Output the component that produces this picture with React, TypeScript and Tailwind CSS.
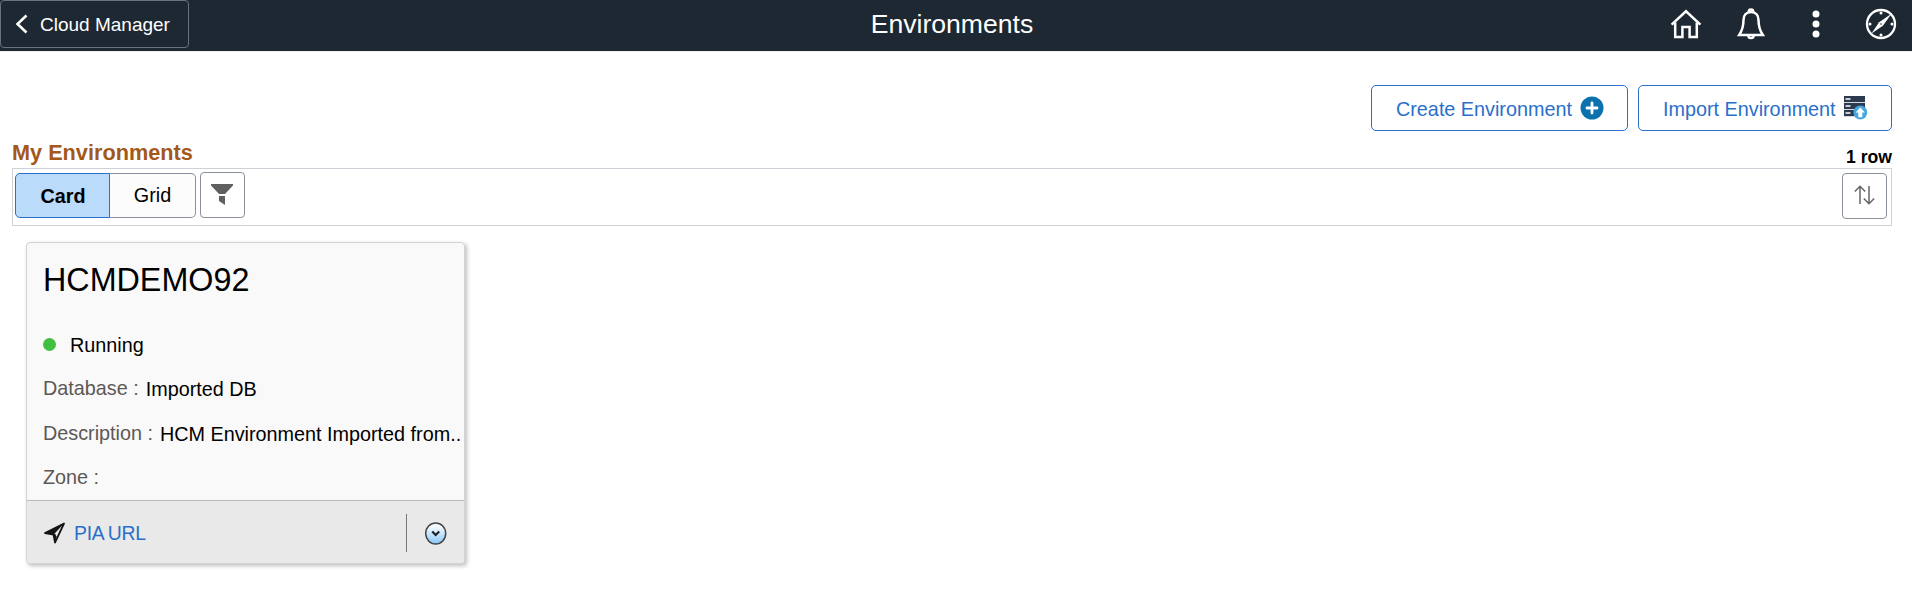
import React from 'react';

function HomeIcon() {
  return (
    <svg className="h-[30px] w-[32px]" viewBox="0 0 32 30" fill="none" stroke="#fff" strokeWidth="2.500">
      <path d="M1.600 15.600 16 2.300l14.400 13.300" />
      <path d="M5.200 13.500v14.400h7.200V18h7.200v9.900h7.200V13.500" />
    </svg>
  );
}

function BellIcon() {
  return (
    <svg className="h-[32px] w-[28px]" viewBox="0 0 28 32" fill="none" stroke="#fff" strokeWidth="2.500">
      <path d="M14 4c-5 0-7.500 3.600-7.500 8 0 7-1.200 10.400-4.300 15h23.600c-3.100-4.600-4.300-8-4.300-15 0-4.400-2.500-8-7.500-8Z" />
      <path d="M11.800 3.800a2.200 2.200 0 0 1 4.400 0" />
      <path d="M11.400 27.500a2.600 2.600 0 0 0 5.200 0" />
    </svg>
  );
}

function CompassIcon() {
  return (
    <svg className="h-[32px] w-[32px]" viewBox="0 0 32 32" fill="none">
      <circle cx="16" cy="16" r="14" stroke="#fff" strokeWidth="2.300" />
      <path d="M26.500 5.800 17.900 17.700 6.500 25.500l7.600-11.300Z" fill="#fff" />
      <circle cx="16" cy="16" r=".8" fill="#1e2833" />
      <g fill="#fff">
        <circle cx="16" cy="5" r="1.500" />
        <circle cx="16" cy="27" r="1.500" />
        <circle cx="5" cy="16" r="1.500" />
        <circle cx="27" cy="16" r="1.500" />
      </g>
    </svg>
  );
}

function ServerIcon() {
  return (
    <svg className="h-[24px] w-[24px]" viewBox="0 0 24 24">
      <g fill="#2b3a4f">
        <rect x="0" y="0" width="21" height="6.200" />
        <rect x="0" y="7" width="21" height="6.200" />
        <rect x="0" y="14" width="21" height="6.200" />
      </g>
      <path d="M1.500 3h5M1.500 10h5M1.500 17h5" stroke="#fff" strokeWidth="1.700" />
      <circle cx="16.300" cy="16.500" r="6.900" fill="#45a8e0" />
      <path d="m16.300 11.500 4.600 4.900h-2.600v4.800h-4v-4.800h-2.600Z" fill="#fff" />
    </svg>
  );
}

function Field({ label, value }: { label: string; value?: string }) {
  return (
    <div className="flex h-6 whitespace-nowrap leading-6">
      <span className="shrink-0 text-[#5c5856]">{label} :</span>
      {value && <span className="ml-[7px] pt-px text-black">{value}</span>}
    </div>
  );
}

export default function App() {
  return (
    <div className="h-[607px] overflow-hidden bg-white font-['Liberation_Sans',Arial,sans-serif] text-[19.8px] text-black">
      <header className="grid h-[52px] grid-cols-[1fr_auto_1fr] border-b border-[#eff1f4] bg-[#1e2833] text-white">
        <button className="flex h-12 w-[189px] items-center rounded-[4px] border border-[#697282] pl-[14px] text-[19px]">
          <svg className="h-[20px] w-[13px]" viewBox="0 0 13 20" fill="none" stroke="#fff" strokeWidth="2.600">
            <path d="M11.500 1.500 2.500 10l9 8.500" />
          </svg>
          <span className="ml-[12px] pt-[2px]">Cloud Manager</span>
        </button>
        <h1 className="pr-[8px] text-[26.6px] leading-[48px]">Environments</h1>
        <div className="flex h-12 items-center justify-end pr-[15px]">
          <HomeIcon />
          <span className="ml-[35px] flex"><BellIcon /></span>
          <svg className="ml-[47px] h-[28px] w-[8px]" viewBox="0 0 8 28" fill="#fff">
            <circle cx="4" cy="4" r="3.500" />
            <circle cx="4" cy="14" r="3.500" />
            <circle cx="4" cy="24" r="3.500" />
          </svg>
          <span className="ml-[45px] flex"><CompassIcon /></span>
        </div>
      </header>

      <main className="pl-3 pr-5">
        <div className="flex justify-end gap-[10px] pt-[33px] text-[#2a6fca]">
          <button className="flex h-[46px] w-[257px] items-center rounded-[5px] border border-[#2a6fca] pl-[24px]">
            <span className="w-[177px] whitespace-nowrap pt-[3px] text-left">Create Environment</span>
            <svg className="ml-[7px] h-[24px] w-[24px]" viewBox="0 0 24 24">
              <circle cx="12" cy="12" r="11.500" fill="#0c72ad" />
              <path d="M12 7v10M7 12h10" stroke="#fff" strokeWidth="2.800" strokeLinecap="round" />
            </svg>
          </button>
          <button className="flex h-[46px] w-[254px] items-center rounded-[5px] border border-[#2a6fca] pl-[24px]">
            <span className="w-[174px] whitespace-nowrap pt-[3px] text-left">Import Environment</span>
            <span className="ml-[7px] flex"><ServerIcon /></span>
          </button>
        </div>

        <div className="flex h-[37px] items-end justify-between font-bold">
          <h2 className="mb-[2px] text-[21.7px] leading-[26px] text-[#a4571a]">My Environments</h2>
          <span className="text-[17.6px] leading-[22px]">1 row</span>
        </div>

        <div className="flex h-[58px] items-start border border-[#cdd1d8] px-[2px] pt-[3px]">
          <div className="flex h-[46px] pt-px">
            <button className="h-[45px] w-[95px] rounded-l-[5px] border border-[#2a6fca] bg-[#badcfa] pl-px pt-[2px] font-bold">Card</button>
            <button className="h-[45px] w-[86px] rounded-r-[5px] border border-l-0 border-[#8a919b] bg-[#fcfcfc]">Grid</button>
          </div>
          <button className="ml-1 flex h-[46px] w-[45px] items-center justify-center rounded-[4px] border border-[#8a919b] pb-[2px] pr-px">
            <svg className="h-[21px] w-[22px]" viewBox="0 0 22 21" fill="#606060">
              <path d="M0 0h22v1.500L14 10H8L0 1.500ZM8 12h6v9l-6-4Z" />
            </svg>
          </button>
          <button className="ml-auto mr-[2px] mt-px flex h-[46px] w-[45px] items-center justify-center rounded-[4px] border border-[#8a919b] pb-[2px]">
            <svg className="h-[20px] w-[21px]" viewBox="0 0 21 20" fill="none" stroke="#666" strokeWidth="1.500">
              <path d="M6 19V1.500M.8 6.500 6 1.200l5.200 5.300M15 1v17.500M9.800 13.500 15 18.800l5.200-5.300" />
            </svg>
          </button>
        </div>

        <section className="ml-[14px] mt-[16px] flex h-[322px] w-[439px] flex-col overflow-hidden rounded-[4px] border border-[#d3d3d3] bg-[#f9f9f9] shadow-[2px_2px_4px_rgba(0,0,0,0.25)]">
          <div className="h-[258px] border-b border-[#bababa] pl-4 pt-[17px]">
            <h3 className="text-[32.3px] leading-10">HCMDEMO92</h3>
            <div className="mt-[33px] flex items-center leading-6">
              <span className="-mt-px h-[13px] w-[13px] rounded-full bg-[#40bf40]" />
              <span className="ml-[14px]">Running</span>
            </div>
            <div className="mt-[19px] flex flex-col gap-[20.500px]">
              <Field label="Database" value="Imported DB" />
              <Field label="Description" value="HCM Environment Imported from.." />
              <Field label="Zone" />
            </div>
          </div>
          <footer className="flex flex-1 items-center bg-[#e9e9e9] pl-[16px] pt-px text-[#2a6fca]">
            <svg className="mt-px h-[23px] w-[23px]" viewBox="0 0 23 23">
              <path d="M21 1.500 2 11l8.500 1.500L12 20.500Z" fill="#eee" stroke="#151515" strokeWidth="1.800" strokeLinejoin="round" />
              <path d="M21 1.500 1.500 11l9 1.800Z" fill="#151515" />
              <path d="m10.500 12.500 1.200 8 1.800-6-1.500-3Z" fill="#151515" />
            </svg>
            <a className="ml-[8px] pt-[3px] text-[19.4px] tracking-[-0.3px] [word-spacing:-0.6px]">PIA URL</a>
            <span className="ml-auto h-[38px] w-px bg-[#777]" />
            <svg className="ml-[18px] mr-[17px] mt-px h-[23px] w-[22px]" viewBox="0 0 22 23">
              <defs>
                <linearGradient id="round" x2="0" y2="1">
                  <stop offset=".2" stopColor="#f2f9ff" />
                  <stop offset="1" stopColor="#86c5fa" />
                </linearGradient>
              </defs>
              <ellipse cx="10.700" cy="11.500" rx="10" ry="10.500" fill="url(#round)" stroke="#454545" strokeWidth="1.500" />
              <path d="m7.200 9.500 3.500 3.500 3.500-3.500" fill="none" stroke="#222" strokeWidth="2.200" />
            </svg>
          </footer>
        </section>
      </main>
    </div>
  );
}
